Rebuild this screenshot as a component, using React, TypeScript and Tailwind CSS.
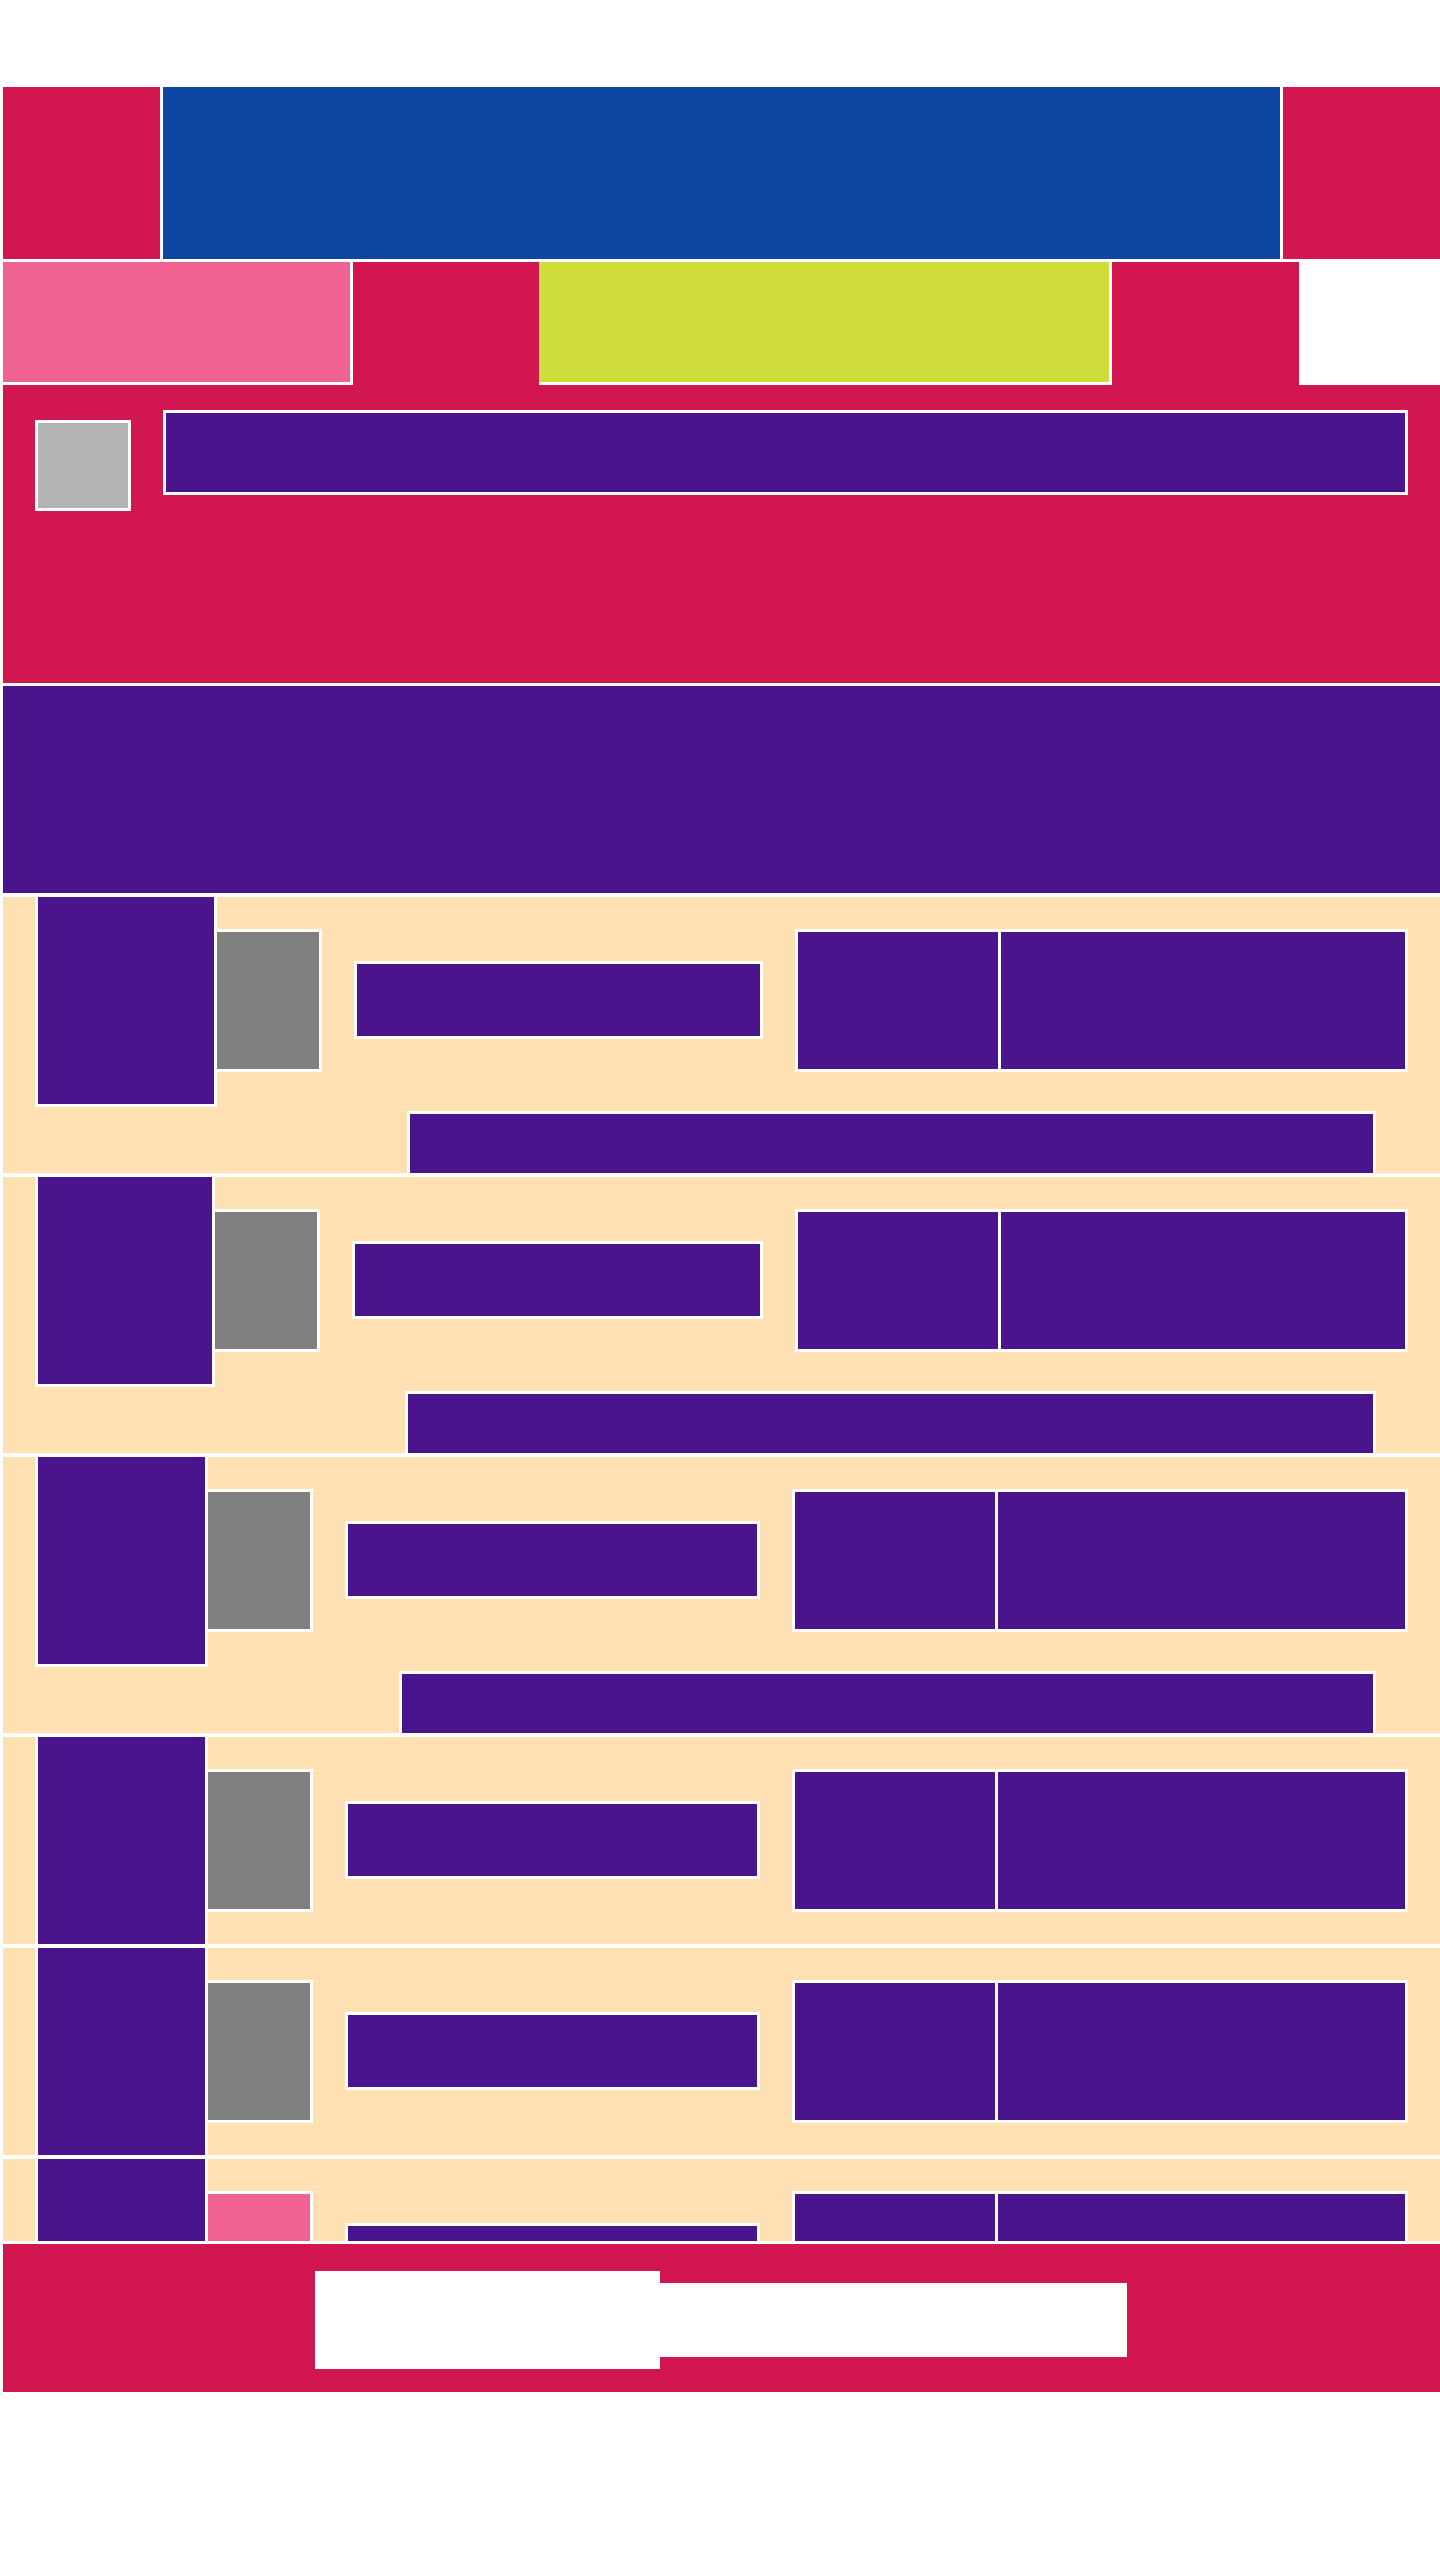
import React from "react";

type Row = {
  imgW: number;
  barX?: number;
  bW: number;
  thumb?: string;
};

// list rows, bar = the long strip under the row
const rows: Row[] = [
  { imgW: 182, barX: 404, bW: 407 },
  { imgW: 180, barX: 402, bW: 407 },
  { imgW: 173, barX: 396, bW: 410 },
  { imgW: 173, bW: 410 },
  { imgW: 173, bW: 410 },
  { imgW: 173, bW: 410, thumb: "pink" },
];

const ListRow = ({ row }: { row: Row }) => {
  const withBar = row.barX !== undefined;
  return (
    <div
      className={
        withBar
          ? "flex flex-col bg-[#FFE0B2] h-[276px] shrink-0"
          : "flex flex-col bg-[#FFE0B2] h-[207px] shrink-0"
      }
    >
      <div className="flex items-start pl-8 pr-8">
        <div
          className={
            withBar
              ? "h-[210px] shrink-0 bg-[#4A148C] border-x-[3px] border-b-[3px] border-white"
              : "h-[207px] shrink-0 bg-[#4A148C] border-x-[3px] border-white"
          }
          style={{ width: row.imgW }}
        />
        <div
          className={
            row.thumb === "pink"
              ? "mt-8 w-[105px] h-[143px] shrink-0 bg-[#F06292] border-[3px] border-l-0 border-white"
              : "mt-8 w-[105px] h-[143px] shrink-0 bg-[#808080] border-[3px] border-l-0 border-white"
          }
        />
        <div className="ml-8 mt-16 flex-1 h-[78px] bg-[#4A148C] border-[3px] border-white" />
        <div className="ml-8 mt-8 flex shrink-0">
          <div className="w-[206px] h-[143px] bg-[#4A148C] border-[3px] border-white" />
          <div
            className="h-[143px] bg-[#4A148C] border-[3px] border-l-0 border-white"
            style={{ width: row.bW }}
          />
        </div>
      </div>
      {withBar && (
        <div className="flex-1 flex items-end pr-16">
          <div
            className="flex-1 h-[62px] bg-[#4A148C] border-[3px] border-b-0 border-white"
            style={{ marginLeft: row.barX }}
          />
        </div>
      )}
    </div>
  );
};

export default function App() {
  return (
    <div className="min-h-[2560px] bg-white pt-[87px] pl-[3px]">
      {/* top header */}
      <div className="flex gap-[3px] h-[172px]">
        <div className="w-[157px] bg-[#D21650]" />
        <div className="flex-1 bg-[#0D47A1]" />
        <div className="w-[157px] bg-[#D21650]" />
      </div>

      <div className="mt-[3px] flex h-[123px]">
        <div className="w-[1296px] flex bg-[#D21650]">
          <div className="w-[350px] h-[123px] bg-[#F06292] border-r-[3px] border-b-[3px] border-white" />
          <div className="w-[186px]" />
          <div className="w-[573px] h-[123px] bg-[#CFDD3A] border-r-[3px] border-b-[3px] border-white" />
        </div>
        <div className="flex-1 bg-white" />
      </div>

      {/* hero */}
      <div className="h-[298px] bg-[#D21650] flex items-start px-8">
        <div className="mt-[35px] w-[96px] h-[91px] shrink-0 bg-[#B3B3B3] border-[3px] border-white" />
        <div className="ml-8 mt-[25px] flex-1 h-[85px] bg-[#4A148C] border-[3px] border-white" />
      </div>

      <div className="mt-[3px] h-[207px] bg-[#4A148C]" />

      {/* list */}
      <div className="mt-[4px] h-[1344px] overflow-hidden flex flex-col gap-[4px] bg-white">
        {rows.map((row, idx) => (
          <ListRow key={`row-${idx}`} row={row} />
        ))}
      </div>

      {/* footer */}
      <div className="mt-[3px] h-[148px] bg-[#D21650] flex items-center pl-[312px] pt-[3px]">
        <div className="w-[345px] h-[98px] bg-white" />
        <div className="w-[467px] h-[74px] bg-white" />
      </div>
    </div>
  );
}
